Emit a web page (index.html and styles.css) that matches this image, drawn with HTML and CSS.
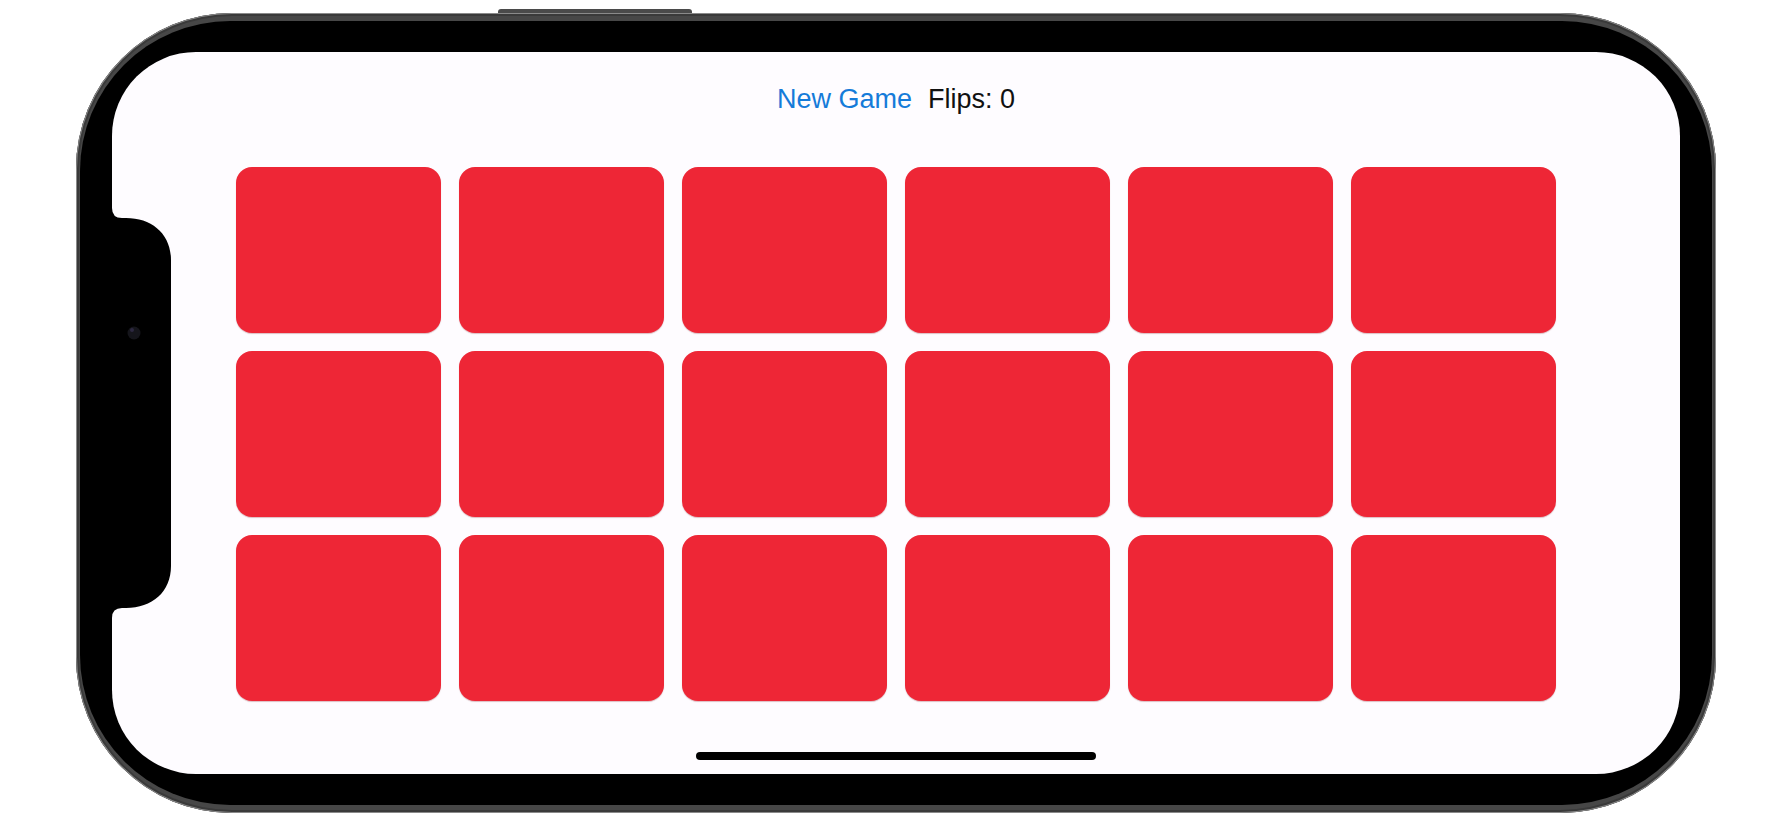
FILE: index.html
```html
<!DOCTYPE html>
<html lang="en">
<head>
    <meta charset="UTF-8">
    <meta name="viewport" content="width=device-width, initial-scale=1.0">
    <title>Memorize</title>
    <link rel="stylesheet" href="styles.css">
</head>
<body>
    <div class="phone">
        <span class="side-button top-button"></span>
        <span class="side-button bottom-button bb-1"></span>
        <span class="side-button bottom-button bb-2"></span>
        <span class="side-button bottom-button bb-3"></span>
        <div class="bezel">
            <div class="screen">
                <svg class="notch" width="60" height="410" viewBox="0 0 60 410">
                    <path d="M0,0 Q0,10 10,10 L14,10 C40,10 59,26 59,52 L59,358 C59,384 40,400 14,400 L10,400 Q0,400 0,410 Z" fill="#000"/>
                    <circle cx="22" cy="125" r="6.5" fill="#15151b"/>
                    <circle cx="20" cy="122" r="2" fill="#2c2840"/>
                </svg>
                <div class="header">
                    <span class="new-game">New Game</span>
                    <span class="flips">Flips: 0</span>
                </div>
                <div class="cards">
                    <div class="card"></div>
                    <div class="card"></div>
                    <div class="card"></div>
                    <div class="card"></div>
                    <div class="card"></div>
                    <div class="card"></div>
                    <div class="card"></div>
                    <div class="card"></div>
                    <div class="card"></div>
                    <div class="card"></div>
                    <div class="card"></div>
                    <div class="card"></div>
                    <div class="card"></div>
                    <div class="card"></div>
                    <div class="card"></div>
                    <div class="card"></div>
                    <div class="card"></div>
                    <div class="card"></div>
                </div>
                <div class="home-indicator"></div>
            </div>
        </div>
    </div>
</body>
</html>
```

FILE: styles.css
```css
:root {
    --card-color: #ee2636;
    --screen-color: #fefcff;
    --blue: #157bd9;
    --rim: #474747;
}
body {
    margin: 0;
    padding: 13px 0 0 76px;
    background-color: #fff;
    font-family: 'Liberation Sans', Arial, sans-serif;
}
.phone {
    position: relative;
    width: 1640px;
    height: 800px;
    box-sizing: border-box;
    padding: 8px 4px;
    border-radius: 156px;
    background-color: var(--rim);
    box-shadow: inset 0 0 0 1px #8a8a8a, inset 0 0 0 3px #3a3a3a;
}
.side-button {
    position: absolute;
    height: 4px;
    background-color: #4a4a4a;
}
.top-button {
    top: -4px;
    left: 422px;
    width: 194px;
    border-radius: 3px 3px 0 0;
}
.bottom-button {
    bottom: -3px;
    height: 3px;
    border-radius: 0 0 3px 3px;
    background-color: #3d3d3d;
}
.bb-1 {
    left: 263px;
    width: 54px;
}
.bb-2 {
    left: 372px;
    width: 111px;
}
.bb-3 {
    left: 517px;
    width: 112px;
}
.bezel {
    height: 100%;
    box-sizing: border-box;
    padding: 31px 32px;
    background-color: #000;
    border-radius: 150px;
}
.screen {
    position: relative;
    height: 100%;
    background-color: var(--screen-color);
    border-radius: 84px;
    display: flex;
    flex-direction: column;
    align-items: center;
}
.notch {
    position: absolute;
    left: 0;
    top: 156px;
}
.header {
    display: flex;
    gap: 16px;
    padding-top: 31px;
    font-size: 27px;
    line-height: 32px;
}
.new-game {
    color: var(--blue);
}
.flips {
    color: #111;
}
.cards {
    display: grid;
    grid-template-columns: repeat(6, 205px);
    grid-auto-rows: 166px;
    gap: 18px;
    margin-top: 52px;
}
.card {
    background-color: var(--card-color);
    border-radius: 16px;
    box-shadow: 0 1px 1px rgba(120, 0, 10, 0.25);
}
.home-indicator {
    margin-top: auto;
    margin-bottom: 14px;
    width: 400px;
    height: 8px;
    border-radius: 4px;
    background-color: #000;
}
```
